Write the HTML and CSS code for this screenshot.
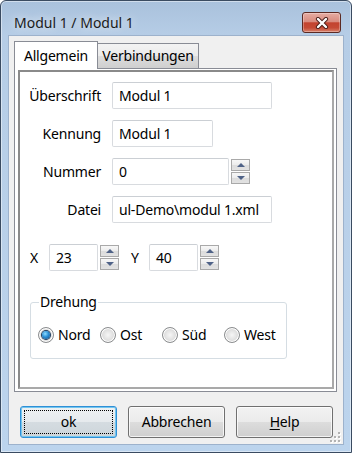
FILE: index.html
```html
<!DOCTYPE html>
<html lang="de">
<head>
  <meta charset="UTF-8">
  <title>Modul 1 / Modul 1</title>
  <link rel="stylesheet" href="styles.css">
</head>
<body>
  <div class="window">
    <div class="titlebar">
      <span class="title">Modul 1 / Modul 1</span>
      <div class="close-btn">
        <svg width="14" height="12" viewBox="0 0 14 12">
          <path d="M3 2 L11 10 M11 2 L3 10" stroke="#4a1d17" stroke-width="4.2" stroke-linecap="round"/>
          <path d="M3 2 L11 10 M11 2 L3 10" stroke="#fff" stroke-width="2.4" stroke-linecap="round"/>
        </svg>
      </div>
    </div>

    <div class="client">
      <div class="tabs">
        <div class="tab active">Allgemein</div>
        <div class="tab">Verbindungen</div>
      </div>

      <div class="panel">
        <div class="page">
          <div class="fields">
            <div class="label">Überschrift</div>
            <div class="field"><div class="textbox w-long">Modul 1</div></div>

            <div class="label">Kennung</div>
            <div class="field"><div class="textbox w-mid">Modul 1</div></div>

            <div class="label">Nummer</div>
            <div class="field">
              <div class="textbox w-num">0</div>
              <div class="spin">
                <div class="spin-btn"><span class="arrow-up"></span></div>
                <div class="spin-btn"><span class="arrow-down"></span></div>
              </div>
            </div>

            <div class="label">Datei</div>
            <div class="field"><div class="textbox w-long">ul-Demo\modul 1.xml</div></div>
          </div>

          <div class="xy-row">
            <div class="xy-label">X</div>
            <div class="textbox w-xy">23</div>
            <div class="spin">
              <div class="spin-btn"><span class="arrow-up"></span></div>
              <div class="spin-btn"><span class="arrow-down"></span></div>
            </div>
            <div class="xy-label y">Y</div>
            <div class="textbox w-xy">40</div>
            <div class="spin">
              <div class="spin-btn"><span class="arrow-up"></span></div>
              <div class="spin-btn"><span class="arrow-down"></span></div>
            </div>
          </div>

          <fieldset class="group">
            <legend>Drehung</legend>
            <div class="radios">
              <div class="radio-item"><span class="radio checked"></span>Nord</div>
              <div class="radio-item"><span class="radio"></span>Ost</div>
              <div class="radio-item"><span class="radio"></span>Süd</div>
              <div class="radio-item"><span class="radio"></span>West</div>
            </div>
          </fieldset>
        </div>
      </div>

      <div class="buttons">
        <div class="btn default">ok</div>
        <div class="btn">Abbrechen</div>
        <div class="btn"><u>H</u>elp</div>
      </div>

      <svg class="grip" width="12" height="12" viewBox="0 0 12 12">
        <g fill="#fff">
          <rect x="10" y="2" width="2" height="2"/>
          <rect x="6" y="6" width="2" height="2"/><rect x="10" y="6" width="2" height="2"/>
          <rect x="2" y="10" width="2" height="2"/><rect x="6" y="10" width="2" height="2"/><rect x="10" y="10" width="2" height="2"/>
        </g>
        <g fill="#b2b2b2">
          <rect x="9" y="1" width="2" height="2"/>
          <rect x="5" y="5" width="2" height="2"/><rect x="9" y="5" width="2" height="2"/>
          <rect x="1" y="9" width="2" height="2"/><rect x="5" y="9" width="2" height="2"/><rect x="9" y="9" width="2" height="2"/>
        </g>
      </svg>
    </div>
  </div>
</body>
</html>
```

FILE: styles.css
```css
* {
  box-sizing: border-box;
}
html, body {
  margin: 0;
  padding: 0;
}
body {
  font-family: "Noto Sans", "Open Sans", sans-serif;
  font-size: 14px;
  letter-spacing: -0.2px;
  color: #000;
  background: #fff;
}

/* window frame */
.window {
  width: 352px;
  height: 453px;
  border: 1px solid #3a4b61;
  border-radius: 6px 6px 0 0;
  background: linear-gradient(#a9c1dc 0, #b6cde6 34px, #bcd4ed 100%);
  box-shadow: inset 0 0 0 1px rgba(255,255,255,0.45);
  display: flex;
  flex-direction: column;
}
.titlebar {
  display: flex;
  align-items: flex-start;
  height: 34px;
  padding: 11px 10px 0 13px;
}
.title {
  line-height: 21px;
  letter-spacing: 0;
  color: #1b1b1b;
  text-shadow: 0 0 8px rgba(255,255,255,0.9);
}
.close-btn {
  margin-left: auto;
  width: 39px;
  height: 21px;
  border: 1px solid #5c2a23;
  border-radius: 3px;
  background: linear-gradient(#e6aca2 0, #d98c7f 45%, #c3432f 52%, #c54a35 78%, #d9836c 100%);
  box-shadow: inset 0 0 0 1px rgba(255,255,255,0.3);
  display: flex;
  align-items: center;
  justify-content: center;
}

/* client area */
.client {
  flex: 1;
  margin: 0 7px 7px 7px;
  border: 1px solid #9db2cc;
  background: #f0f0f0;
  position: relative;
}
.tabs {
  display: flex;
  align-items: flex-end;
  padding: 5px 0 0 5px;
  margin-bottom: -1px;
  position: relative;
  z-index: 1;
}
.tab {
  width: 101px;
  height: 26px;
  border: 1px solid #898c95;
  border-left: none;
  background: linear-gradient(#f3f3f3 0, #ebebeb 50%, #dddddd 50%, #cfcfcf 100%);
  text-align: center;
  line-height: 24px;
}
.tab.active {
  width: 84px;
  height: 28px;
  border-left: 1px solid #898c95;
  border-bottom: none;
  background: #fff;
  line-height: 27px;
}
.panel {
  margin-left: 5px;
  width: 323px;
  height: 324px;
  border: 1px solid #898c95;
  background: #fff;
  padding: 1px 2px 2px 3px;
}
.page {
  height: 319px;
  border: 2px solid #a0a0a0;
  border-color: #8a8a8a #a9a9a9 #a9a9a9 #8a8a8a;
}

/* form rows */
.fields {
  display: grid;
  grid-template-columns: 81px 1fr;
  column-gap: 11px;
  row-gap: 11px;
  margin-top: 10px;
}
.label {
  text-align: right;
  line-height: 27px;
}
.field {
  display: flex;
}
.textbox {
  height: 27px;
  border: 1px solid #d8dbdf;
  border-top-color: #cbcfd4;
  border-radius: 2px;
  background: #fff;
  padding: 0 6px;
  line-height: 25px;
  white-space: nowrap;
  overflow: hidden;
}
.w-long { width: 160px; }
.w-mid { width: 101px; }
.w-num { width: 117px; }
.w-xy { width: 49px; }

.spin {
  display: flex;
  flex-direction: column;
  gap: 1px;
  width: 19px;
  margin: 1px 0 0 2px;
}
.spin-btn {
  height: 12px;
  border: 1px solid #a9a9a9;
  background: linear-gradient(#f7f7f7 0, #ececec 50%, #dcdcdc 50%, #e2e2e2 100%);
  display: flex;
  align-items: center;
  justify-content: center;
}
.arrow-up {
  border-left: 4px solid transparent;
  border-right: 4px solid transparent;
  border-bottom: 4px solid #4f6287;
}
.arrow-down {
  border-left: 4px solid transparent;
  border-right: 4px solid transparent;
  border-top: 4px solid #4f6287;
}

.xy-row {
  display: flex;
  margin-top: 21px;
  padding-left: 10px;
  height: 27px;
}
.xy-label {
  width: 19px;
  line-height: 27px;
}
.xy-label.y {
  width: 18px;
  margin-left: 12px;
}

/* Drehung group */
.group {
  margin: 22px 0 0 10px;
  width: 256px;
  border: 1px solid #d5dde3;
  border-radius: 3px;
  padding: 0 0 14px 7px;
}
.group legend {
  margin-left: 1px;
  padding: 0 1px;
  line-height: 18px;
}
.radios {
  display: flex;
  margin-top: 15px;
}
.radio-item {
  width: 62px;
  display: flex;
  align-items: center;
  gap: 4px;
  line-height: 18px;
}
.radio {
  width: 16px;
  height: 16px;
  border-radius: 50%;
  border: 1px solid #8b8d8f;
  background: radial-gradient(circle, #f6f6f6 0, #e3e3e3 45%, #c9c9c9 100%);
  box-shadow: inset 0 0 0 1px #fff;
  display: flex;
  align-items: center;
  justify-content: center;
}
.radio.checked::after {
  content: "";
  width: 8px;
  height: 8px;
  border-radius: 50%;
  background: radial-gradient(circle at 40% 35%, #8fdcff 0, #2a8fd6 45%, #124b86 100%);
  box-shadow: 0 0 0 1px #1d3c5e;
}

/* dialog buttons */
.buttons {
  display: flex;
  gap: 11px;
  margin-top: 14px;
  padding-left: 11px;
}
.btn {
  width: 97px;
  height: 32px;
  border: 1px solid #707070;
  border-radius: 3px;
  background: linear-gradient(#f2f2f2 0, #ebebeb 50%, #dddddd 50%, #cfcfcf 100%);
  box-shadow: inset 0 0 0 1px rgba(255,255,255,0.75);
  text-align: center;
  line-height: 30px;
  position: relative;
}
.btn.default {
  border-color: #2f8fd6;
  box-shadow: inset 0 0 0 1px #73c6ef;
  background: linear-gradient(#eef1f3 0, #e6eaed 50%, #d5dce1 50%, #cdd5da 100%);
}
.btn.default::after {
  content: "";
  position: absolute;
  top: 3px;
  left: 3px;
  right: 3px;
  bottom: 3px;
  border: 1px dotted #000;
}
.btn u {
  text-decoration-thickness: 1px;
  text-underline-offset: 2px;
}
.grip {
  position: absolute;
  right: 2px;
  bottom: 1px;
}
```
